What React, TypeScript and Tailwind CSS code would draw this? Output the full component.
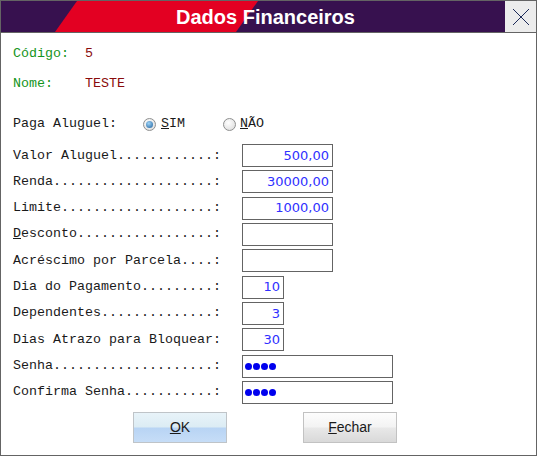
import React from 'react';

const mono = "font-['Liberation_Mono','Courier_New',monospace] text-[13.33px]";

type Field = { label: React.ReactNode; value?: string; width: string; password?: boolean };

const fields: Field[] = [
  { label: 'Valor Aluguel............:', value: '500,00', width: 'w-[91px]' },
  { label: 'Renda....................:', value: '30000,00', width: 'w-[91px]' },
  { label: 'Limite...................:', value: '1000,00', width: 'w-[91px]' },
  { label: <><u>D</u>esconto.................:</>, width: 'w-[91px]' },
  { label: 'Acréscimo por Parcela....:', width: 'w-[91px]' },
  { label: 'Dia do Pagamento.........:', value: '10', width: 'w-[42px]' },
  { label: 'Dependentes..............:', value: '3', width: 'w-[42px]' },
  { label: 'Dias Atrazo para Bloquear:', value: '30', width: 'w-[42px]' },
  { label: 'Senha....................:', width: 'w-[151px]', password: true },
  { label: 'Confirma Senha...........:', width: 'w-[151px]', password: true },
];

function Radio({ checked }: { checked?: boolean }) {
  return (
    <span className="w-[13px] h-[13px] rounded-full border border-[#8e8f8f] bg-[radial-gradient(circle_at_40%_35%,#ffffff,#d8d8d8)] flex items-center justify-center">
      {checked && (
        <span className="w-[7px] h-[7px] rounded-full bg-[radial-gradient(circle_at_40%_35%,#9fd4f7,#1d5f9c)]" />
      )}
    </span>
  );
}

export default function App() {
  return (
    <div className="w-[537px] h-[456px] border border-[#646464] bg-white flex flex-col text-[#1a1a1a] overflow-hidden">
      <div className="relative h-[32px] shrink-0 border-b border-[#646464] bg-[#37114f] flex">
        <svg className="absolute left-0 top-0" width="504" height="31" viewBox="0 0 504 31">
          <polygon points="76,0 257,0 235,31 54,31" fill="#e30022" />
        </svg>
        <div className="relative flex-1 flex items-center pl-[175px] font-['Liberation_Sans',Arial,sans-serif] font-bold text-[20px] text-white">
          Dados Financeiros
        </div>
        <div className="relative w-[31px] h-full bg-[#ececec] flex items-center justify-center">
          <svg width="18" height="18" viewBox="0 0 18 18">
            <path d="M1 1 L17 17 M17 1 L1 17" stroke="#1c2a58" strokeWidth="1" />
          </svg>
        </div>
      </div>

      <div className={`flex flex-col pl-[12px] ${mono}`}>
        <div className="h-[20px] mt-[11px] flex items-center whitespace-pre">
          <span className="text-[#15951c]">Código:  </span>
          <span className="text-[#8a0c0c]">5</span>
        </div>
        <div className="h-[20px] mt-[10px] flex items-center whitespace-pre">
          <span className="text-[#15951c]">Nome:    </span>
          <span className="text-[#8a0c0c]">TESTE</span>
        </div>
        <div className="h-[20px] mt-[20px] flex items-center">
          <span className="w-[130px]">Paga Aluguel:</span>
          <Radio checked />
          <span className="ml-[5px] w-[62px]"><u>S</u>IM</span>
          <Radio />
          <span className="ml-[4px]"><u>N</u>ÃO</span>
        </div>

        <div className="mt-[10px] flex flex-col gap-[3.33px]">
          {fields.map((f, i) => (
            <div key={i} className="flex items-center h-[23px]">
              <span className="w-[229px] whitespace-pre">{f.label}</span>
              <div
                className={`${f.width} h-[23px] border border-[#646464] flex items-center font-['DejaVu_Sans',Tahoma,sans-serif] text-[13px] text-[#3030ff] ${
                  f.password ? 'justify-start pl-[2px] gap-[1px]' : 'justify-end pr-[3px]'
                }`}
              >
                {f.password
                  ? [0, 1, 2, 3].map((d) => <span key={d} className="w-[7px] h-[7px] rounded-full bg-[#0000ee]" />)
                  : f.value}
              </div>
            </div>
          ))}
        </div>

        <div className="mt-[8px] flex font-['Liberation_Sans',Arial,sans-serif] text-[14px]">
          <button className="ml-[120px] w-[94px] h-[31px] border border-[#bfc4c8] bg-[linear-gradient(to_bottom,#e8f3f9_0%,#dcecf4_48%,#b8d4f4_52%,#c6ddf7_100%)] flex items-center justify-center">
            <span><u>O</u>K</span>
          </button>
          <button className="ml-[76px] w-[94px] h-[31px] border border-[#c2c2c2] bg-[linear-gradient(to_bottom,#fdfdfd_0%,#f3f3f3_48%,#e8e8e8_52%,#d9d9d9_100%)] flex items-center justify-center">
            <span><u>F</u>echar</span>
          </button>
        </div>
      </div>
    </div>
  );
}
